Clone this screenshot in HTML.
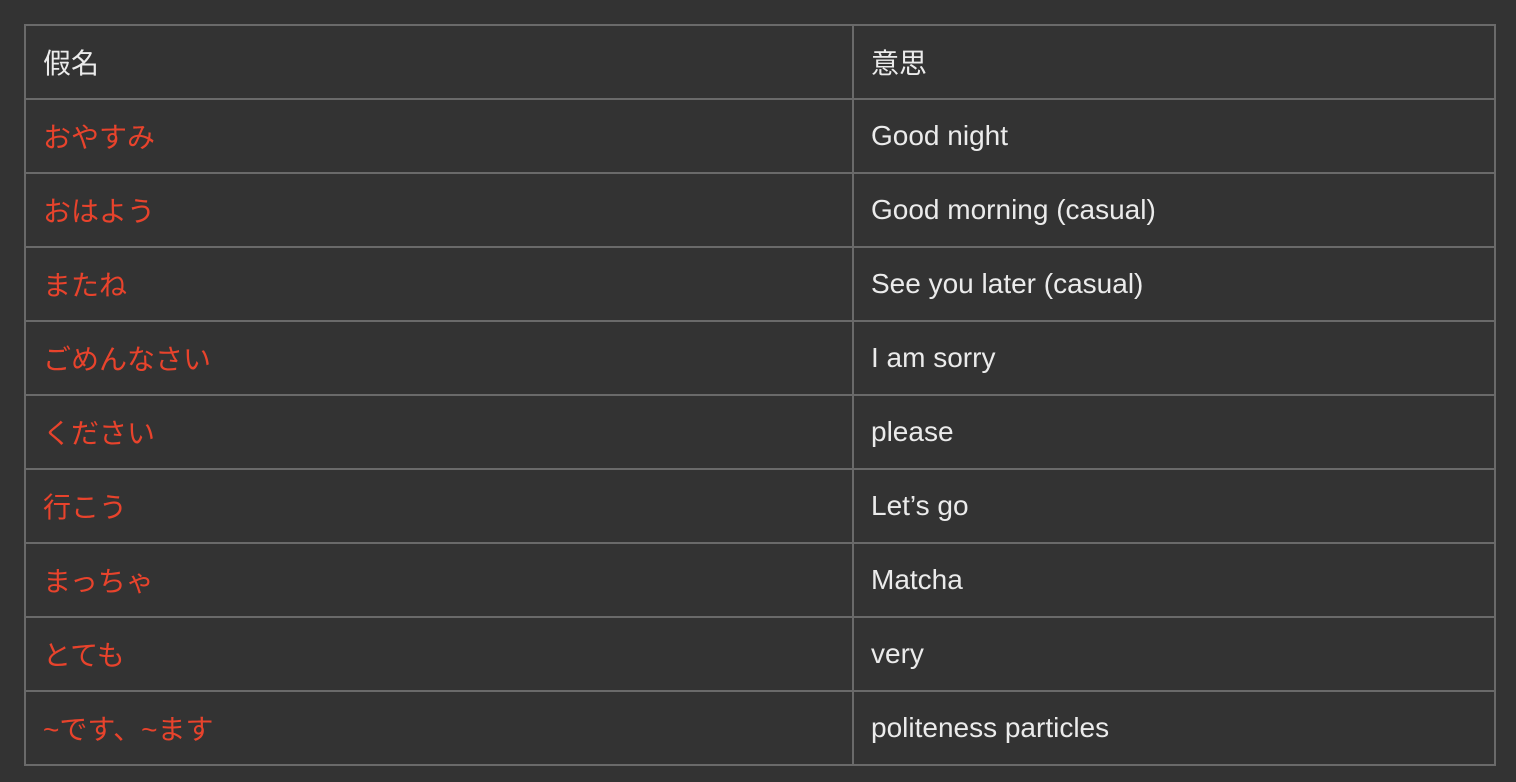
<!DOCTYPE html>
<html><head><meta charset="utf-8"><style>
html,body{margin:0;background:#333;width:1516px;height:782px;overflow:hidden}
table{position:absolute;left:24px;top:24px;border-collapse:collapse;width:1472px;font-family:"Liberation Sans","Noto Sans CJK JP",sans-serif;font-size:28px;color:#ebebeb}
tr{height:74px}
td{border:2px solid #6a6a6a;height:74px;padding:0 0 0 17px;box-sizing:border-box;vertical-align:middle}
td:first-child{width:828px}
.r{color:#e8432c;font-size:28px}
</style></head><body>
<table>
<tr><td>假名</td><td>意思</td></tr>
<tr><td class="r">おやすみ</td><td>Good night</td></tr>
<tr><td class="r">おはよう</td><td>Good morning (casual)</td></tr>
<tr><td class="r">またね</td><td>See you later (casual)</td></tr>
<tr><td class="r">ごめんなさい</td><td>I am sorry</td></tr>
<tr><td class="r">ください</td><td>please</td></tr>
<tr><td class="r">行こう</td><td>Let’s go</td></tr>
<tr><td class="r">まっちゃ</td><td>Matcha</td></tr>
<tr><td class="r">とても</td><td>very</td></tr>
<tr><td class="r">~です、~ます</td><td>politeness particles</td></tr>
</table>
</body></html>
